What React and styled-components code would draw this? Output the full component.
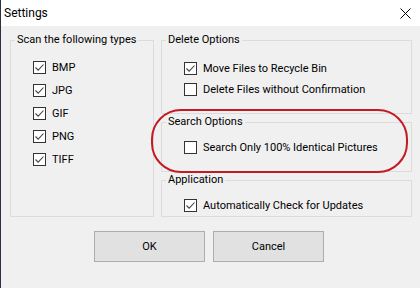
import React from 'react';
import styled, { createGlobalStyle } from 'styled-components';

const Global = createGlobalStyle`
  body {
    margin: 0;
    background: #f0f0f0;
    font-family: Roboto, "Liberation Sans", sans-serif;
    font-size: 11px;
    color: #000;
  }
`

const Window = styled.div`
  position: relative;
  width: 420px;
  height: 288px;
  box-sizing: border-box;
  border-left: 1px solid #2b3140;
  background: #f0f0f0;
  display: flex;
  flex-direction: column;
  overflow: hidden;
`

const TitleBar = styled.div`
  height: 26px;
  flex: none;
  background: #fff;
  display: flex;
  align-items: center;
  justify-content: space-between;
  padding-left: 3px;
`

const Title = styled.span`
  font-size: 12px;
  line-height: 16px;
`

const CloseBox = styled.div`
  width: 30px;
  height: 26px;
  display: flex;
  align-items: center;
  justify-content: center;
`

const Body = styled.div`
  flex: 1;
  padding: 6px 8px 0 9px;
`

const Columns = styled.div`
  display: flex;
  gap: 7px;
`

const RightColumn = styled.div`
  flex: 1;
  display: flex;
  flex-direction: column;
`

const GroupBox = styled.fieldset`
  margin: 0;
  min-width: 0;
  border: 1px solid #dcdcdc;
  padding: ${p => p.$pad};
  width: ${p => p.$width || 'auto'};
  flex: ${p => (p.$grow ? 1 : 'none')};
  box-sizing: border-box;
`

const Legend = styled.legend`
  padding: 0 2px;
  line-height: 16px;
  font-size: 11px;
  white-space: nowrap;
`

const OptionList = styled.div`
  display: flex;
  flex-direction: column;
  padding-left: 18px;
`

const OptionRow = styled.label`
  display: flex;
  align-items: center;
  height: ${p => p.$h}px;
  gap: 6px;
  white-space: nowrap;
`

const Box = styled.span`
  width: 13px;
  height: 13px;
  box-sizing: border-box;
  border: 1px solid #333;
  background: #fff;
  display: flex;
  align-items: center;
  justify-content: center;
  flex: none;
`

const ButtonRow = styled.div`
  display: flex;
  gap: 8px;
  margin-top: 14px;
  padding-left: 84px;
`

const Button = styled.button`
  width: 111px;
  height: 31px;
  background: #e1e1e1;
  border: 1px solid #adadad;
  font-family: inherit;
  font-size: 11px;
  color: #000;
  padding: 0;
`

const Highlight = styled.div`
  position: absolute;
  left: 150px;
  top: 109px;
  width: 257px;
  height: 64px;
  box-sizing: border-box;
  border: 2px solid #c41a21;
  border-radius: 30px;
  pointer-events: none;
`

function Check({ checked, label, h }) {
  return (
    <OptionRow $h={h}>
      <Box>
        {checked && (
          <svg width="11" height="11" viewBox="0 0 11 11">
            <path d="M1.5 5.5 L4.2 8.2 L9.5 2.5" fill="none" stroke="#444" strokeWidth="1.1" />
          </svg>
        )}
      </Box>
      <span>{label}</span>
    </OptionRow>
  )
}

export default function App() {
  const types = ['BMP', 'JPG', 'GIF', 'PNG', 'TIFF']
  return (
    <Window>
      <Global />
      <TitleBar>
        <Title>Settings</Title>
        <CloseBox>
          <svg width="11" height="11" viewBox="0 0 11 11">
            <path d="M0.5 0.5 L10.5 10.5 M10.5 0.5 L0.5 10.5" stroke="#000" strokeWidth="1" />
          </svg>
        </CloseBox>
      </TitleBar>
      <Body>
        <Columns>
          <GroupBox $width="144px" $pad="8px 0 0 4px">
            <Legend>Scan the following types</Legend>
            <OptionList>
              {types.map(t => (
                <Check key={t} checked label={t} h={23} />
              ))}
            </OptionList>
          </GroupBox>
          <RightColumn>
            <GroupBox $pad="10px 0 13px 4px">
              <Legend>Delete Options</Legend>
              <OptionList>
                <Check checked label="Move Files to Recycle Bin" h={21} />
                <Check label="Delete Files without Confirmation" h={21} />
              </OptionList>
            </GroupBox>
            <GroupBox $pad="7px 0 13px 4px">
              <Legend>Search Options</Legend>
              <OptionList>
                <Check label="Search Only 100% Identical Pictures" h={21} />
              </OptionList>
            </GroupBox>
            <GroupBox $grow $pad="7px 0 0 4px">
              <Legend>Application</Legend>
              <OptionList>
                <Check checked label="Automatically Check for Updates" h={21} />
              </OptionList>
            </GroupBox>
          </RightColumn>
        </Columns>
        <ButtonRow>
          <Button>OK</Button>
          <Button>Cancel</Button>
        </ButtonRow>
      </Body>
      <Highlight />
    </Window>
  )
}
